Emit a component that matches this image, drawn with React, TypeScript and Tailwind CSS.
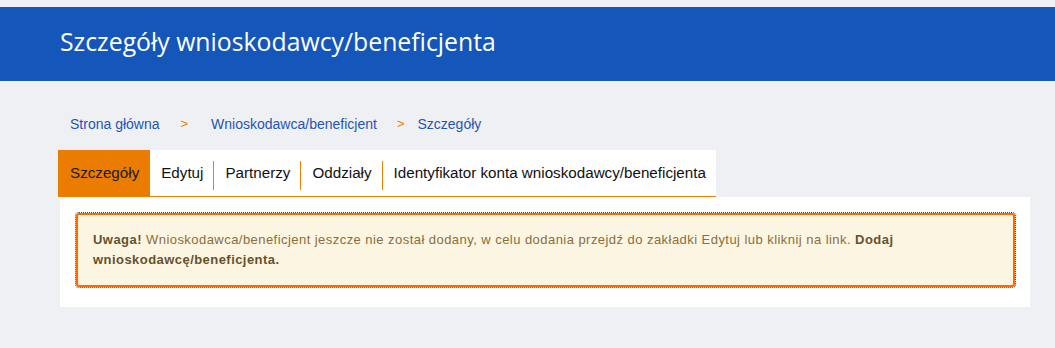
const tabs = ["Edytuj", "Partnerzy", "Oddziały", "Identyfikator konta wnioskodawcy/beneficjenta"];

export default function App() {
  return (
    <div className="min-h-[348px] bg-[#eff0f4] pt-[7px] font-['Liberation_Sans',Arial,sans-serif]">
      {/* Header */}
      <header className="h-[74px] bg-[#1456ba] flex items-center pl-[60px]">
        <h1 className="text-[24.8px] text-white font-['Open_Sans',sans-serif] leading-none -mt-[5px]">
          Szczegóły wnioskodawcy/beneficjenta
        </h1>
      </header>

      <div className="pl-[58px] pr-[25px]">
        {/* Breadcrumb */}
        <nav className="flex items-center h-[20px] mt-[33px] pl-[12px] text-[14px] text-[#1f55b4]">
          <a href="#">Strona główna</a>
          <span className="text-[#ef7d00] text-[13px] ml-[21px] mr-[23px]">&gt;</span>
          <a href="#">Wnioskodawca/beneficjent</a>
          <span className="text-[#ef7d00] text-[13px] ml-[20px] mr-[13px]">&gt;</span>
          <a href="#">Szczegóły</a>
        </nav>

        {/* Tabs */}
        <div className="flex mt-[16px]">
          <div className="flex h-[47px] bg-white border-b border-[#ef7d00]">
            <div className="bg-[#ea7c00] pl-[12px] pr-[11px] flex items-center text-[15.2px] text-[#1a1a1a]">Szczegóły</div>
            {tabs.map((t, i) => (
              <div key={t} className="flex items-end">
                {i > 0 && <div className="w-px h-[29px] bg-[#ef7d00] mb-[6px]" />}
                <div className="h-full flex items-center pl-[11px] pr-[10px] text-[15.2px] text-[#111]">{t}</div>
              </div>
            ))}
          </div>
        </div>

        {/* Panel */}
        <div className="bg-white ml-[2px] pt-[16px] pb-[20px] pl-[16px] pr-[15px]">
          <div className="outline-1 outline-dotted outline-[#444] border-2 border-[#ff6a00] rounded-[3px] bg-[#fcf5e2] px-[15px] py-[15px] text-[13px] leading-[20px] tracking-[0.45px] text-[#8a6d3b]">
            <b className="text-[#66512c]">Uwaga!</b> Wnioskodawca/beneficjent jeszcze nie został dodany, w celu dodania przejdź do zakładki Edytuj lub kliknij na link.{" "}
            <a href="#" className="font-bold text-[#66512c]">Dodaj wnioskodawcę/beneficjenta.</a>
          </div>
        </div>
      </div>
    </div>
  );
}
